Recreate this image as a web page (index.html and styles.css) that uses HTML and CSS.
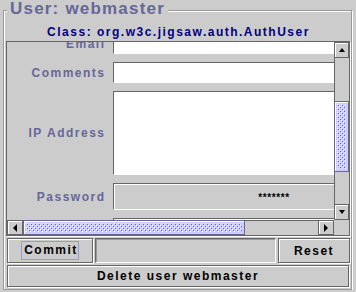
FILE: index.html
```html
<!DOCTYPE html>
<html>
<head>
<meta name="viewport" content="width=device-width, initial-scale=1">
<link rel="stylesheet" href="styles.css">
</head>
<body>

<svg class="defs" width="0" height="0">
  <defs>
    <pattern id="bumps" width="4" height="4" patternUnits="userSpaceOnUse">
      <rect x="0" y="0" width="1" height="1" fill="#ffffff"/>
      <rect x="2" y="2" width="1" height="1" fill="#ffffff"/>
      <rect x="1" y="1" width="1" height="1" fill="#666699"/>
      <rect x="3" y="3" width="1" height="1" fill="#666699"/>
    </pattern>
  </defs>
</svg>

<div class="titled">
  <span class="title">User: webmaster</span>
  <div class="cls">Class: org.w3c.jigsaw.auth.AuthUser</div>

  <div class="scrollpane">
    <div class="viewport">
      <div class="form">
        <label>Email</label><div class="field"></div>
        <label>Comments</label><div class="field"></div>
        <label>IP Address</label><div class="field area"></div>
        <label>Password</label><div class="field pass"><span>*******</span></div>
        <span></span><div class="field"></div>
      </div>
    </div>

    <div class="vbar">
      <div class="arrow"><span class="tri up"></span></div>
      <div class="track"><div class="thumb vthumb"><svg><rect width="100%" height="100%" fill="url(#bumps)"/></svg></div></div>
      <div class="arrow"><span class="tri down"></span></div>
    </div>

    <div class="hbar">
      <div class="arrow"><span class="tri left"></span></div>
      <div class="track"><div class="thumb hthumb"><svg><rect width="100%" height="100%" fill="url(#bumps)"/></svg></div></div>
      <div class="arrow"><span class="tri right"></span></div>
    </div>

    <div class="corner"></div>
  </div>

  <div class="actions">
    <button class="btn commit"><span class="focus">Commit</span></button>
    <div class="msg"></div>
    <button class="btn reset">Reset</button>
  </div>
  <button class="btn delete">Delete user webmaster</button>
</div>

</body>
</html>
```

FILE: styles.css
```css
body {
    margin: 0;
    background: #cccccc;
    font-family: "Liberation Sans", Arial, sans-serif;
    font-weight: bold;
    font-size: 12px;
    letter-spacing: 1.5px;
}

.defs { position: absolute; }

/* Titled, etched border round the whole panel */
.titled {
    position: relative;
    box-sizing: border-box;
    margin: 10px 0 0 3px;
    width: 349px;
    height: 280px;
    padding: 0 1px 0 3px;
    border: 1px solid #999999;
    box-shadow: inset 1px 1px #ffffff, 1px 1px #ffffff;
}

.title {
    position: absolute;
    top: -11px;
    left: 3px;
    padding: 0 3px;
    background: #cccccc;
    color: #666699;
    font-size: 17px;
    line-height: 18px;
    letter-spacing: 1.2px;
}

.cls {
    margin-top: 14px;
    line-height: 14px;
    text-align: center;
    color: #000080;
}

/* Scroll pane */
.scrollpane {
    box-sizing: border-box;
    margin: 2px 0 0 -1px;
    width: 344px;
    height: 195px;
    border: 1px solid #666666;
    box-shadow: 1px 1px #ffffff;
    display: grid;
    grid-template-columns: 327px 15px;
    grid-template-rows: 178px 15px;
}

.viewport {
    overflow: hidden;
}

.form {
    width: 428px;
    margin-top: -9px;
    display: grid;
    grid-template-columns: 97px 322px;
    column-gap: 9px;
    row-gap: 8px;
}

.form label {
    align-self: center;
    justify-self: end;
    margin-right: -1.5px;
    color: #666699;
    line-height: 14px;
}

.field {
    box-sizing: border-box;
    height: 21px;
    background: #ffffff;
    border: 1px solid;
    border-color: #666666 #ffffff #ffffff #666666;
}

.field.area { height: 84px; }

.field.pass {
    height: 27px;
    background: #cccccc;
    box-shadow: inset 1px 1px #ffffff;
    display: flex;
    justify-content: center;
    align-items: center;
    font-size: 10px;
    letter-spacing: 0.6px;
    line-height: 10px;
    padding-top: 3px;
}

/* Scroll bars */
.vbar {
    display: flex;
    flex-direction: column;
}

.hbar {
    display: flex;
}

.arrow {
    box-sizing: border-box;
    flex: 0 0 16px;
    background: #cccccc;
    border: 1px solid #666666;
    box-shadow: inset 1px 1px #ffffff;
    display: flex;
    align-items: center;
    justify-content: center;
}

.vbar .arrow { height: 16px; width: 15px; }
.hbar .arrow { height: 15px; width: 16px; }

.tri {
    width: 0;
    height: 0;
    border: 0 solid transparent;
}

.tri.up { border-width: 0 3px 4px 3px; border-bottom-color: #000000; }
.tri.down { border-width: 4px 3px 0 3px; border-top-color: #000000; }
.tri.left { border-width: 4px 4px 4px 0; border-right-color: #000000; }
.tri.right { border-width: 4px 0 4px 4px; border-left-color: #000000; }

.track {
    flex: 1;
    background: #cccccc;
}

.vbar .track { border-left: 1px solid #666666; }
.hbar .track { border-top: 1px solid #666666; }

.thumb {
    box-sizing: border-box;
    background: #ccccff;
    border: 1px solid #666699;
    box-shadow: inset 1px 1px #ffffff;
    padding: 2px;
}

.thumb svg {
    display: block;
    width: 100%;
    height: 100%;
    shape-rendering: crispEdges;
}

.vthumb {
    margin: 43px 0 0 -1px;
    height: 71px;
}

.hthumb {
    margin-top: -1px;
    width: 222px;
    height: 15px;
}

.corner {
    background: #cccccc;
}

/* Buttons along the bottom */
.btn {
    box-sizing: border-box;
    background: #cccccc;
    border: 1px solid #666666;
    box-shadow: inset 1px 1px #ffffff, 1px 1px #ffffff;
    font: inherit;
    letter-spacing: inherit;
    color: #000000;
    padding: 0;
    margin: 0;
}

.actions {
    margin-top: 2px;
    height: 25px;
    display: flex;
    gap: 2px;
}

.commit { width: 86px; }

.focus {
    display: inline-block;
    padding: 1px 0 2px 2px;
    border: 1px solid #9999cc;
    line-height: 14px;
}

.msg {
    flex: 1;
    box-sizing: border-box;
    border: 1px solid;
    border-color: #666666 #ffffff #ffffff #666666;
    box-shadow: inset 1px 1px #999999;
}

.reset { width: 72px; }

.delete {
    display: block;
    margin-top: 2px;
    width: 342px;
    height: 22px;
}
```
